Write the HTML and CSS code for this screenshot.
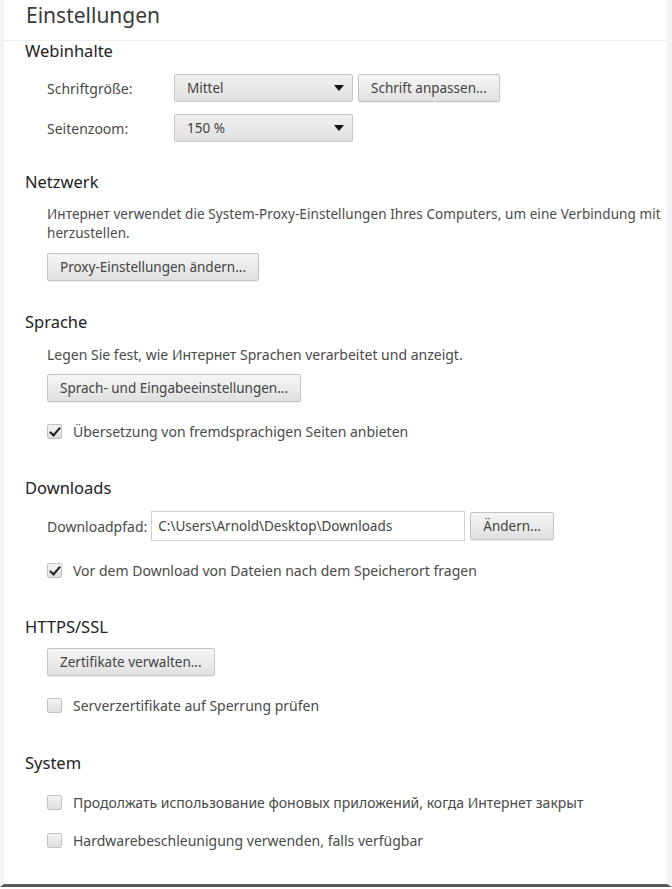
FILE: index.html
```html
<!DOCTYPE html>
<html lang="de">
<head>
  <meta charset="UTF-8" />
  <title>Einstellungen</title>
  <link rel="stylesheet" href="styles.css">
</head>
<body>
  <div class="page">
    <header class="page-header">
      <h1>Einstellungen</h1>
    </header>

    <section class="group group-web">
      <h2>Webinhalte</h2>
      <div class="field-row">
        <span class="field-label">Schriftgröße:</span>
        <div class="select"><span>Mittel</span><span class="arrow"></span></div>
        <button class="btn btn-inline" type="button">Schrift anpassen...</button>
      </div>
      <div class="field-row row-gap">
        <span class="field-label">Seitenzoom:</span>
        <div class="select"><span>150 %</span><span class="arrow"></span></div>
      </div>
    </section>

    <section class="group group-net">
      <h2>Netzwerk</h2>
      <p class="note note-proxy">Интернет verwendet die System-Proxy-Einstellungen Ihres Computers, um eine Verbindung mit<br>herzustellen.</p>
      <button class="btn btn-block" type="button">Proxy-Einstellungen ändern...</button>
    </section>

    <section class="group group-lang">
      <h2>Sprache</h2>
      <p class="note">Legen Sie fest, wie Интернет Sprachen verarbeitet und anzeigt.</p>
      <button class="btn btn-block" type="button">Sprach- und Eingabeeinstellungen...</button>
      <label class="check check-after-btn"><span class="box checked"></span>Übersetzung von fremdsprachigen Seiten anbieten</label>
    </section>

    <section class="group group-dl">
      <h2>Downloads</h2>
      <div class="path-row">
        <span class="path-label">Downloadpfad:</span>
        <div class="path-input">C:\Users\Arnold\Desktop\Downloads</div>
        <button class="btn btn-inline" type="button">Ändern...</button>
      </div>
      <label class="check check-after-row"><span class="box checked"></span>Vor dem Download von Dateien nach dem Speicherort fragen</label>
    </section>

    <section class="group group-ssl">
      <h2>HTTPS/SSL</h2>
      <button class="btn btn-block btn-first" type="button">Zertifikate verwalten...</button>
      <label class="check check-after-btn"><span class="box"></span>Serverzertifikate auf Sperrung prüfen</label>
    </section>

    <section class="group group-sys">
      <h2>System</h2>
      <label class="check check-first"><span class="box"></span>Продолжать использование фоновых приложений, когда Интернет закрыт</label>
      <label class="check check-next"><span class="box"></span>Hardwarebeschleunigung verwenden, falls verfügbar</label>
    </section>
  </div>
</body>
</html>
```

FILE: styles.css
```css
* {
  box-sizing: border-box;
}

body {
  margin: 0;
  font-family: 'Noto Sans', 'Open Sans', sans-serif;
  font-size: 14px;
  color: #4a4a4a;
  background: #fff;
}

.page {
  width: 672px;
  height: 887px;
  border-left: 4px solid #f3f3f7;
  border-right: 5px solid #f3f3f7;
  border-bottom: 3px solid #5a5a5a;
  overflow: hidden;
  background: #fff;
}

.page-header {
  height: 41px;
  border-bottom: 1px solid #eeeeee;
  padding-left: 22px;
}

h1 {
  margin: 0;
  font-size: 21px;
  font-weight: normal;
  line-height: 30px;
  color: #3a3a3a;
}

.group {
  padding-left: 21px;
}

h2 {
  margin: 0;
  font-size: 16.5px;
  font-weight: normal;
  line-height: 22px;
  color: #222;
}

.group-web h2 { margin-top: -1px; }
.group-net { margin-top: 29px; }
.group-lang { margin-top: 30px; }
.group-dl { margin-top: 36px; }
.group-ssl { margin-top: 36px; }
.group-sys { margin-top: 37px; }

.field-row {
  display: flex;
  align-items: center;
  margin-top: 12px;
  padding-left: 22px;
  height: 28px;
}

.field-label {
  width: 127px;
}

.select {
  width: 179px;
  height: 28px;
  display: flex;
  align-items: center;
  justify-content: space-between;
  padding: 0 8px 0 12px;
  border: 1px solid #c8c8c8;
  border-radius: 2px;
  background: linear-gradient(#efefef, #e2e2e2);
  font-size: 13.5px;
  color: #444;
}

.arrow {
  width: 0;
  height: 0;
  border-left: 5px solid transparent;
  border-right: 5px solid transparent;
  border-top: 6px solid #111;
}

.btn {
  font: inherit;
  font-size: 13.5px;
  color: #444;
  height: 28px;
  padding: 0 12px;
  border: 1px solid #c4c4c4;
  border-radius: 2px;
  background: linear-gradient(#f6f6f6, #e0e0e0);
  box-shadow: 0 1px 0 rgba(0, 0, 0, 0.06);
}

.btn-inline {
  margin-left: 5px;
}

.btn-block {
  display: block;
  margin: 10px 0 0 22px;
}

.btn-first {
  margin-top: 10px;
}

.note {
  margin: 12px 0 0 22px;
  line-height: 19px;
  white-space: nowrap;
}

.note-proxy {
  font-size: 13.5px;
  letter-spacing: 0.08px;
}

.check {
  display: flex;
  align-items: center;
  height: 20px;
  margin-left: 22px;
}

.check-after-btn { margin-top: 19px; }
.check-after-row { margin-top: 19px; }
.check-first { margin-top: 18px; }
.check-next { margin-top: 18px; }

.box {
  position: relative;
  width: 15px;
  height: 15px;
  margin-right: 11px;
  border: 1px solid #c2c2c2;
  border-radius: 2px;
  background: linear-gradient(#f4f4f4, #dedede);
}

.box.checked::after {
  content: "";
  position: absolute;
  left: 4px;
  top: 0px;
  width: 4px;
  height: 9px;
  border-right: 2.5px solid #222;
  border-bottom: 2.5px solid #222;
  transform: rotate(40deg);
}

.path-row {
  display: flex;
  align-items: center;
  margin: 12px 0 0 22px;
  height: 30px;
}

.path-label {
  margin-right: 4px;
}

.path-input {
  width: 314px;
  height: 30px;
  line-height: 28px;
  padding: 0 6px;
  border: 1px solid #cfcfcf;
  background: #fff;
  font-size: 13.5px;
  color: #444;
}
```
